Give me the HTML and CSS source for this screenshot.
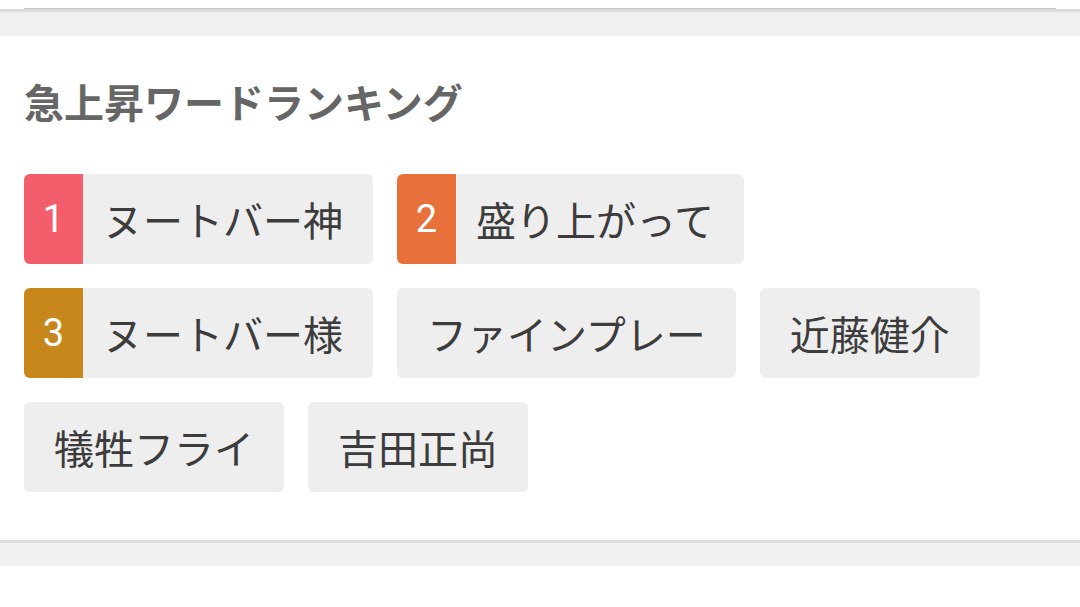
FILE: index.html
```html
<!DOCTYPE html>
<html lang="ja">
<head>
<meta charset="utf-8">
<title>急上昇ワードランキング</title>
<link rel="stylesheet" href="styles.css">
</head>
<body>
<div class="prev"><div class="prev-line"></div></div>
<div class="band band-top"></div>
<section class="ranking">
  <h2 class="ranking-title">急上昇ワードランキング</h2>
  <ul class="chips">
    <li class="chip chip-ranked"><span class="rank rank-1">1</span><span class="chip-text">ヌートバー神</span></li>
    <li class="chip chip-ranked"><span class="rank rank-2">2</span><span class="chip-text">盛り上がって</span></li>
    <li class="chip chip-ranked"><span class="rank rank-3">3</span><span class="chip-text">ヌートバー様</span></li>
    <li class="chip"><span class="chip-text">ファインプレー</span></li>
    <li class="chip"><span class="chip-text">近藤健介</span></li>
    <li class="chip"><span class="chip-text">犠牲フライ</span></li>
    <li class="chip"><span class="chip-text">吉田正尚</span></li>
  </ul>
</section>
<div class="band band-bottom"></div>
</body>
</html>
```
FILE: styles.css
```css
html, body {
  margin: 0;
  padding: 0;
  background: #ffffff;
  font-family: Roboto, "Noto Sans CJK JP", sans-serif;
}

.prev {
  height: 9px;
}

.prev-line {
  margin: 0 24px;
  height: 9px;
  box-sizing: border-box;
  border-bottom: 1px solid #c8c8c8;
}

.band {
  background: #f0f0f0;
  border-top: 3px solid #dcdcdc;
}

.band-top {
  height: 24px;
}

.band-bottom {
  height: 23px;
}

.ranking {
  padding: 45px 24px 48px;
}

.ranking-title {
  margin: 0;
  font-family: "Noto Sans CJK JP", sans-serif;
  font-size: 40px;
  line-height: 40px;
  font-weight: 700;
  color: #666666;
}

.chips {
  list-style: none;
  margin: 53px 0 0;
  padding: 0;
  display: flex;
  flex-wrap: wrap;
  gap: 24px;
}

.chip {
  display: flex;
  align-items: center;
  height: 90px;
  padding: 0 30px;
  background: #eeeeee;
  border-radius: 6px;
  color: #3c3c3c;
}

.chip-ranked {
  padding: 0 30px 0 0;
}

.chip-text {
  font-family: "Noto Sans CJK JP", sans-serif;
  font-size: 40px;
  line-height: 40px;
}

.rank {
  display: flex;
  align-items: center;
  justify-content: center;
  width: 59px;
  height: 100%;
  margin-right: 20px;
  border-radius: 6px 0 0 6px;
  color: #ffffff;
  font-family: Roboto, sans-serif;
  font-size: 38px;
}

.rank-1 { background: #f45e6c; }
.rank-2 { background: #e8703a; }
.rank-3 { background: #c8871b; }
```
